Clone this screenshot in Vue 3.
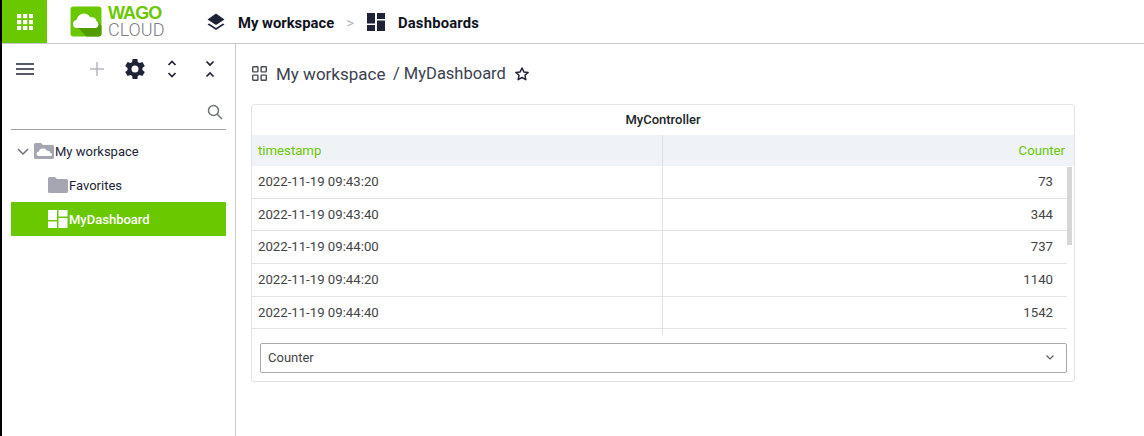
<script setup>
const rows = [
  ['2022-11-19 09:43:20', '73'],
  ['2022-11-19 09:43:40', '344'],
  ['2022-11-19 09:44:00', '737'],
  ['2022-11-19 09:44:20', '1140'],
  ['2022-11-19 09:44:40', '1542'],
]
</script>

<template>
  <div class="page">
    <header class="top">
      <div class="apps">
        <svg width="16" height="16" viewBox="0 0 16 16" fill="#fff">
          <template v-for="y in [0, 6, 12]" :key="y">
            <rect v-for="x in [0, 6, 12]" :key="x" :x="x" :y="y" width="4.2" height="4.2" />
          </template>
        </svg>
      </div>
      <div class="logo">
        <svg width="32" height="31" viewBox="0 0 32 31">
          <rect width="31" height="30" x="0.5" y="0.5" rx="3" fill="#6ac800" />
          <path d="M8 22 L16.500 30.500 H28.500 Q31.500 30.500 31.500 27.500 V20 L27 15 Z" fill="#539c00" />
          <path d="M7 22 Q3 22 3 18 Q3 14.500 6.500 14 Q8 7.500 14 7.500 Q18 7.500 20 11 Q26 11 26.500 15 Q28.500 16 28.500 18.500 Q28 22 25 22 Z" fill="#fff" />
        </svg>
        <div class="logotext">
          <div class="wago">WAGO</div>
          <div class="cloud">CLOUD</div>
        </div>
      </div>
      <div class="crumbs">
        <svg class="layers" width="18" height="18" viewBox="0 0 18 18" fill="#1f2337">
          <path d="M9 0.500 L17.500 6.500 L9 12 L0.500 6.500 Z" />
          <path d="M2 10.500 L9 15 L16 10.500 L17.500 11.500 L9 17 L0.500 11.500 Z" />
        </svg>
        <span class="crumb crumb-a">My workspace</span>
        <span class="gt">&gt;</span>
        <svg class="dash" width="18" height="18" viewBox="0 0 18 18" fill="#1f2337">
          <rect x="0" y="0" width="8" height="10.500" />
          <rect x="0" y="12" width="8" height="6" />
          <rect x="10" y="0" width="8" height="6" />
          <rect x="10" y="7.500" width="8" height="10.500" />
        </svg>
        <span class="crumb crumb-b">Dashboards</span>
      </div>
    </header>

    <div class="body">
      <aside class="side">
        <div class="tools">
          <svg class="burger" width="18" height="12" viewBox="0 0 18 12" stroke="#1f2337" stroke-width="1.500">
            <path d="M0 1 H18 M0 6 H18 M0 11 H18" />
          </svg>
          <svg class="plus" width="14" height="14" viewBox="0 0 14 14" stroke="#b4b6bb" stroke-width="1.500">
            <path d="M0 7 H14 M7 0 V14" />
          </svg>
          <svg class="gear" width="20" height="20" viewBox="2 2 20 20" fill="#1f2337">
            <path fill-rule="evenodd" d="M19.400 13a7.500 7.500 0 0 0 0-2l2.400-1.900-2.400-4.100-2.900 1.100a7.500 7.500 0 0 0-1.700-1L14.400 2H9.600l-.5 3.100a7.500 7.500 0 0 0-1.700 1L4.600 5 2.200 9.100 4.600 11a7.500 7.500 0 0 0 0 2l-2.400 1.900 2.400 4.100 2.900-1.100a7.500 7.500 0 0 0 1.700 1l.4 3.100h4.800l.4-3.100a7.500 7.500 0 0 0 1.700-1l2.900 1.100 2.400-4.100zM12 15.500a3.500 3.500 0 1 1 0-7 3.500 3.500 0 0 1 0 7z" />
          </svg>
          <svg class="expand" width="10" height="18" viewBox="0 0 10 18" fill="none" stroke="#1f2337" stroke-width="1.700">
            <path d="M1.500 5 L5 1.500 L8.500 5 M1.500 13 L5 16.500 L8.500 13" />
          </svg>
          <svg class="collapse" width="10" height="18" viewBox="0 0 10 18" fill="none" stroke="#1f2337" stroke-width="1.700">
            <path d="M1.500 1.500 L5 5 L8.500 1.500 M1.500 16.500 L5 13 L8.500 16.500" />
          </svg>
        </div>
        <div class="search">
          <svg width="16" height="16" viewBox="0 0 16 16" fill="none" stroke="#6f7277" stroke-width="1.500">
            <circle cx="6.500" cy="6.500" r="5" />
            <path d="M10.200 10.200 L15 15" />
          </svg>
        </div>
        <div class="tree">
          <div class="node root">
            <svg class="chev" width="12" height="7" viewBox="0 0 12 7" fill="none" stroke="#6f7277" stroke-width="1.500">
              <path d="M1 1 L6 6 L11 1" />
            </svg>
            <svg class="ficon" width="20" height="16" viewBox="0 0 20 16">
              <path d="M1.500 0 H7 L9 2 H18.500 Q20 2 20 3.500 V14.500 Q20 16 18.500 16 H1.500 Q0 16 0 14.500 V1.500 Q0 0 1.500 0 Z" fill="#a5a6b2" />
              <path d="M5 13 Q2.500 13 2.500 10.800 Q2.500 8.800 4.800 8.800 Q5.500 5.500 9 5.500 Q12 5.500 13 7.800 Q16 7.500 16.500 10 Q18 10.300 18 11.500 Q18 13 16 13 Z" fill="#fff" />
            </svg>
            <span>My workspace</span>
          </div>
          <div class="node child">
            <svg class="ficon" width="20" height="16" viewBox="0 0 20 16">
              <path d="M1.500 0 H7 L9 2 H18.500 Q20 2 20 3.500 V14.500 Q20 16 18.500 16 H1.500 Q0 16 0 14.500 V1.500 Q0 0 1.500 0 Z" fill="#a5a6b2" />
            </svg>
            <span>Favorites</span>
          </div>
          <div class="node child active">
            <svg class="ficon" width="20" height="18" viewBox="0 0 20 18" fill="#fff">
              <rect x="0" y="0" width="9" height="10" />
              <rect x="0" y="11.500" width="9" height="6.500" />
              <rect x="10.500" y="0" width="9" height="6.500" />
              <rect x="10.500" y="8" width="9" height="10" />
            </svg>
            <span>MyDashboard</span>
          </div>
        </div>
      </aside>

      <main class="main">
        <div class="title">
          <svg class="grid" width="15" height="15" viewBox="0 0 15 15" fill="none" stroke="#4a4d55" stroke-width="1.400">
            <rect x="0.700" y="0.700" width="5.200" height="5.200" rx="0.600" />
            <rect x="9.100" y="0.700" width="5.200" height="5.200" rx="0.600" />
            <rect x="0.700" y="9.100" width="5.200" height="5.200" rx="0.600" />
            <rect x="9.100" y="9.100" width="5.200" height="5.200" rx="0.600" />
          </svg>
          <span class="t1">My workspace</span>
          <span class="t2">/ MyDashboard</span>
          <svg class="star" width="14" height="14" viewBox="1 1 22 22" fill="none" stroke="#1f2337" stroke-width="2.300" stroke-linejoin="round">
            <path d="M12 2.500 L14.900 8.700 L21.700 9.500 L16.700 14.100 L18 20.900 L12 17.500 L6 20.900 L7.300 14.100 L2.300 9.500 L9.100 8.700 Z" />
          </svg>
        </div>

        <section class="card">
          <div class="card-title">MyController</div>
          <div class="thead">
            <div class="th th-l">timestamp</div>
            <div class="th th-r">Counter</div>
          </div>
          <div class="tbody">
            <div class="rows">
              <div v-for="r in rows" :key="r[0]" class="row">
                <div class="td td-l">{{ r[0] }}</div>
                <div class="td td-r">{{ r[1] }}</div>
              </div>
              <div class="row tail"><div class="td td-l"></div><div class="td td-r"></div></div>
            </div>
            <div class="track"><div class="thumb"></div></div>
          </div>
          <div class="select">
            <span>Counter</span>
            <svg width="8" height="5" viewBox="0 0 8 5" fill="none" stroke="#55585e" stroke-width="1.100">
              <path d="M0.500 0.500 L4 4 L7.500 0.500" />
            </svg>
          </div>
        </section>
      </main>
    </div>
  </div>
</template>

<style>
html, body { margin: 0; background: #fff; }
</style>

<style scoped>
.page {
  width: 1144px;
  height: 436px;
  box-sizing: border-box;
  border-left: 2px solid #000;
  overflow: hidden;
  display: flex;
  flex-direction: column;
  font-family: Roboto, "Liberation Sans", sans-serif;
  color: #212529;
}
.top {
  height: 43px;
  display: flex;
  align-items: stretch;
  border-bottom: 1px solid #c8c8c8;
  flex: none;
}
.apps {
  width: 45px;
  background: #6ac800;
  display: flex;
  align-items: center;
  justify-content: center;
  flex: none;
}
.logo {
  margin-left: 23px;
  display: flex;
  align-items: center;
  gap: 6px;
  width: 137px;
  flex: none;
}
.logotext { line-height: 1; }
.wago {
  font-size: 18px;
  font-weight: 700;
  color: #6ac800;
  line-height: 16px;
  letter-spacing: -0.900px;
  font-family: "Liberation Sans", sans-serif;
}
.cloud {
  font-size: 18px;
  font-weight: 300;
  color: #7d8085;
  line-height: 16px;
  margin-top: 1px;
  font-family: Roboto, sans-serif;
}
.crumbs {
  display: flex;
  align-items: center;
  font-size: 14.800px;
  font-weight: 700;
  color: #10121e;
}
.crumb, .gt { padding-top: 2px; }
.crumb-a { margin-left: 13px; }
.gt { margin-left: 12px; color: #b4b6bb; font-weight: 400; }
.dash { margin-left: 13px; }
.crumb-b { margin-left: 13px; letter-spacing: 0.200px; }

.body { flex: 1; display: flex; min-height: 0; }
.side {
  width: 233px;
  flex: none;
  border-right: 1px solid #c8c8c8;
}
.tools {
  height: 50px;
  display: flex;
  align-items: center;
  padding-left: 14px;
}
.plus { margin-left: 56px; }
.gear { margin-left: 21px; }
.expand { margin-left: 22px; }
.collapse { margin-left: 28px; }
.search {
  margin-left: 9px;
  width: 215px;
  height: 36px;
  border-bottom: 1px solid #a0a0a0;
  display: flex;
  justify-content: flex-end;
  align-items: center;
  box-sizing: border-box;
}
.search svg { margin-right: 3px; }
.tree { padding-top: 4px; font-size: 13px; }
.node {
  height: 34px;
  display: flex;
  align-items: center;
  width: 215px;
  margin-left: 9px;
  color: #212437;
}
.root .chev { margin-left: 6px; margin-right: 5px; }
.child { padding-left: 37px; box-sizing: border-box; }
.ficon { margin-right: 1px; flex: none; }
.active { background: #6ac800; color: #fff; font-weight: 500; }

.main { flex: 1; padding: 0 0 0 15px; min-width: 0; }
.title {
  height: 60px;
  box-sizing: border-box;
  padding-bottom: 1px;
  display: flex;
  align-items: center;
  font-size: 17px;
  color: #3c4150;
}
.grid { margin-left: 1px; }
.t1 { margin-left: 9px; }
.t2 { margin-left: 7.500px; font-size: 16.500px; }
.star { margin-left: 9px; }
.card {
  width: 822px;
  height: 276px;
  border: 1px solid #e3e3e3;
  border-radius: 3px;
}
.card-title {
  height: 30px;
  line-height: 29px;
  text-align: center;
  font-size: 13px;
  font-weight: 500;
  color: #212529;
}
.thead {
  height: 31px;
  display: flex;
  background: #eff3f7;
  font-size: 13.200px;
  color: #6ac800;
}
.th { line-height: 31px; }
.th-l {
  width: 411px;
  padding-left: 6px;
  box-sizing: border-box;
  border-right: 1px solid #dcdfe3;
}
.th-r { flex: 1; text-align: right; padding-right: 9px; }
.tbody {
  display: flex;
  height: 169px;
  overflow: hidden;
}
.rows { width: 815px; flex: none; }
.row {
  height: 32.700px;
  box-sizing: border-box;
  display: flex;
  border-bottom: 1px solid #e3e3e3;
  font-size: 13.200px;
  color: #444;
  line-height: 32px;
}
.tail { border-bottom: 0; }
.td-l {
  width: 411px;
  padding-left: 6px;
  box-sizing: border-box;
  border-right: 1px solid #e3e3e3;
}
.td-r { flex: 1; text-align: right; padding-right: 14px; }
.track { width: 7px; flex: none; }
.thumb {
  width: 5px;
  height: 78px;
  margin-top: 1px;
  background: #d6d6d6;
}
.select {
  margin: 8px 0 0 8px;
  width: 807px;
  height: 30px;
  box-sizing: border-box;
  border: 1px solid #a8a8a8;
  border-radius: 2px;
  display: flex;
  align-items: center;
  justify-content: space-between;
  padding: 0 12px 2px 7px;
  font-size: 13px;
  color: #444;
}
</style>
